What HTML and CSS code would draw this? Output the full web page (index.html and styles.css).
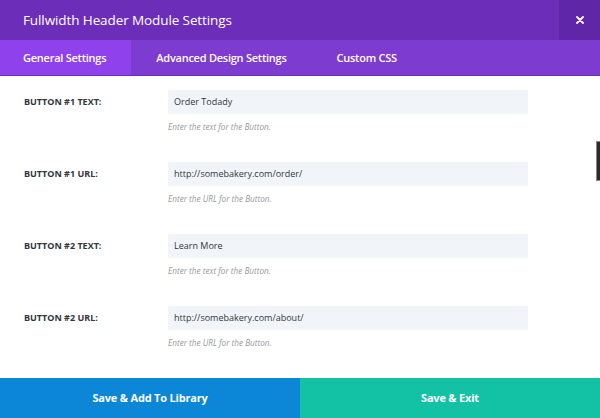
FILE: index.html
```html
<!DOCTYPE html>
<html lang="en">
<head>
    <meta charset="UTF-8">
    <meta name="viewport" content="width=device-width, initial-scale=1.0">
    <title>Fullwidth Header Module Settings</title>
    <link rel="stylesheet" href="styles.css">
</head>
<body>

<div class="modal">
    <header class="title-bar">
        <h1>Fullwidth Header Module Settings</h1>
        <button class="close" aria-label="Close">
            <svg width="8" height="8" viewBox="0 0 8 8">
                <path d="M1 1 L7 7 M7 1 L1 7" stroke="#fff" stroke-width="1.8" stroke-linecap="round"/>
            </svg>
        </button>
    </header>

    <nav class="tabs">
        <a href="#" class="active">General Settings</a>
        <a href="#">Advanced Design Settings</a>
        <a href="#">Custom CSS</a>
    </nav>

    <main class="content">
        <div class="field">
            <label>Button #1 Text:</label>
            <div class="control">
                <input type="text" value="Order Todady">
                <p class="desc">Enter the text for the Button.</p>
            </div>
        </div>

        <div class="field">
            <label>Button #1 URL:</label>
            <div class="control">
                <input type="text" value="http://somebakery.com/order/">
                <p class="desc">Enter the URL for the Button.</p>
            </div>
        </div>

        <div class="field">
            <label>Button #2 Text:</label>
            <div class="control">
                <input type="text" value="Learn More">
                <p class="desc">Enter the text for the Button.</p>
            </div>
        </div>

        <div class="field">
            <label>Button #2 URL:</label>
            <div class="control">
                <input type="text" value="http://somebakery.com/about/">
                <p class="desc">Enter the URL for the Button.</p>
            </div>
        </div>

        <div class="scroll-thumb"></div>
    </main>

    <footer class="actions">
        <button class="library">Save &amp; Add To Library</button>
        <button class="exit">Save &amp; Exit</button>
    </footer>
</div>

</body>
</html>
```

FILE: styles.css
```css
body {
    margin: 0;
    font-family: "Open Sans", Arial, sans-serif;
    background-color: #fff;
    color: #32373c;
}

.modal {
    display: flex;
    flex-direction: column;
    height: 418px;
    overflow: hidden;
}

.title-bar {
    display: flex;
    align-items: stretch;
    height: 40px;
    background-color: #6c2eb9;
}

.title-bar h1 {
    flex: 1;
    margin: 0;
    padding-left: 23px;
    font-size: 13.5px;
    font-weight: 400;
    line-height: 41px;
    color: #fff;
    letter-spacing: -0.1px;
}

.close {
    width: 41px;
    border: none;
    padding: 0;
    background-color: #5f26a8;
    display: flex;
    align-items: center;
    justify-content: center;
    cursor: pointer;
}

.tabs {
    display: flex;
    height: 35px;
    background-color: #7e3bd0;
    border-bottom: 1px solid #6a2db8;
}

.tabs a {
    display: flex;
    align-items: center;
    padding: 0 25px;
    font-size: 11px;
    font-weight: 600;
    color: #fff;
    text-decoration: none;
    letter-spacing: -0.25px;
}

.tabs a:first-child {
    padding-left: 23px;
}

.tabs a.active {
    background-color: #8f42ec;
}

.content {
    flex: 1;
    position: relative;
    padding-top: 14px;
}

.field {
    display: flex;
    height: 72px;
}

.field label {
    flex-shrink: 0;
    width: 168px;
    box-sizing: border-box;
    padding-left: 24px;
    font-size: 9px;
    font-weight: 700;
    line-height: 24px;
    text-transform: uppercase;
    color: #32373c;
}

.control {
    width: 360px;
}

.control input {
    display: block;
    width: 100%;
    height: 24px;
    box-sizing: border-box;
    border: none;
    padding: 0 6px;
    background-color: #f1f5f9;
    font-family: "Open Sans", Arial, sans-serif;
    font-size: 9px;
    color: #32373c;
    outline: none;
}

.desc {
    margin: 7px 0 0;
    font-size: 8.2px;
    font-style: italic;
    color: #999;
    line-height: 11px;
}

.scroll-thumb {
    position: absolute;
    right: 0;
    top: 65px;
    width: 3px;
    height: 38px;
    background-color: #2b2b2b;
    border: 1px solid #888;
    border-right: none;
}

.actions {
    display: flex;
    height: 41px;
}

.actions button {
    flex: 1;
    border: none;
    font-family: "Open Sans", Arial, sans-serif;
    font-size: 11px;
    font-weight: 700;
    color: #fff;
    cursor: pointer;
    letter-spacing: -0.2px;
}

.library {
    background-color: #0c87d7;
}

.exit {
    background-color: #13c2a4;
}
```
